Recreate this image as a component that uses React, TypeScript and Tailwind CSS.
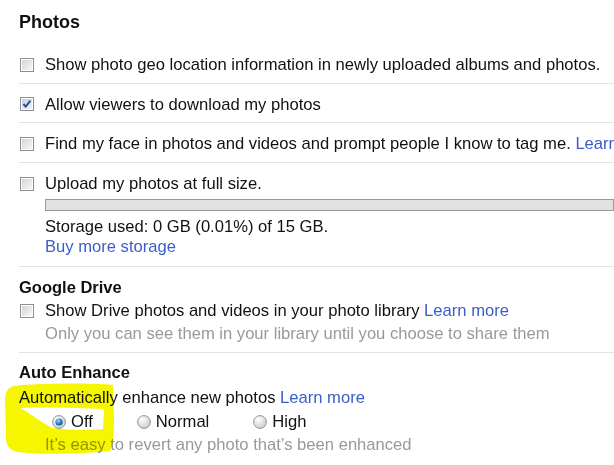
import React from 'react';

const FONT = { fontFamily: '"Liberation Sans", Arial, sans-serif' };

function Checkbox({ checked = false }: { checked?: boolean }) {
  return (
    <svg width="14" height="14" viewBox="0 0 14 14" className="shrink-0">
      <defs>
        <linearGradient id={checked ? 'cbOn' : 'cbOff'} x1="0" y1="0" x2="1" y2="1">
          <stop offset="0" stopColor={checked ? '#c3cee4' : '#d4d4d4'} />
          <stop offset="1" stopColor={checked ? '#f2f5fa' : '#f8f8f8'} />
        </linearGradient>
      </defs>
      <rect x="0.5" y="0.5" width="13" height="13" fill="#fff" stroke="#8e8f8f" />
      <rect x="2" y="2" width="10" height="10" fill={`url(#${checked ? 'cbOn' : 'cbOff'})`} />
      {checked && (
        <path d="M3.4 7 L5.8 9.6 L10.4 3.6" fill="none" stroke="#2a4a8c" strokeWidth="1.9" />
      )}
    </svg>
  );
}

function Radio({ checked = false }: { checked?: boolean }) {
  return (
    <svg width="14" height="14" viewBox="0 0 14 14" className="shrink-0">
      <defs>
        <radialGradient id="rOff" cx="0.35" cy="0.3" r="0.8">
          <stop offset="0" stopColor="#ffffff" />
          <stop offset="1" stopColor="#c8c8c8" />
        </radialGradient>
        <radialGradient id="rDot" cx="0.4" cy="0.35" r="0.7">
          <stop offset="0" stopColor="#9fe3ff" />
          <stop offset="0.5" stopColor="#2a8fd0" />
          <stop offset="1" stopColor="#0d3f7a" />
        </radialGradient>
      </defs>
      <circle cx="7" cy="7" r="6.4" fill="url(#rOff)" stroke="#8a8a8a" strokeWidth="0.9" />
      {checked && <circle cx="7" cy="7" r="3.6" fill="url(#rDot)" />}
    </svg>
  );
}

function CheckRow({ checked, h, children }: { checked?: boolean; h: string; children: React.ReactNode }) {
  return (
    <div className={`flex items-center gap-[11px] pl-px pt-[2px] border-b border-[#e3e3e3] whitespace-nowrap ${h}`}>
      <Checkbox checked={checked} />
      <span className="leading-[19px]">{children}</span>
    </div>
  );
}

const Link = ({ children }: { children: React.ReactNode }) => (
  <span className="text-[#3a5ec8]">{children}</span>
);

export default function App() {
  return (
    <div className="relative w-[614px] h-[465px] overflow-hidden bg-white text-[16.6px] text-[#111]" style={FONT}>
      <div className="pl-[19px]">
        <h2 className="font-bold text-[18px] leading-[21px] pt-[12px] pb-[11px]">Photos</h2>

        <CheckRow h="h-[40px]">Show photo geo location information in newly uploaded albums and photos.</CheckRow>
        <CheckRow h="h-[39px]" checked>
          Allow viewers to download my photos
        </CheckRow>
        <CheckRow h="h-[40px]">
          Find my face in photos and videos and prompt people I know to tag me. <Link>Learn more</Link>
        </CheckRow>

        <div className="pt-[11px] pb-[9px] border-b border-[#e3e3e3] whitespace-nowrap">
          <div className="flex items-center gap-[11px] pl-px h-[20px]">
            <Checkbox />
            <span>Upload my photos at full size.</span>
          </div>
          <div className="ml-[26px] mt-[5px] h-[12px] w-[569px] bg-[#e1e1e1] border border-[#9a9a9a]" />
          <div className="ml-[26px] leading-[20px] mt-[6px]">Storage used: 0 GB (0.01%) of 15 GB.</div>
          <div className="ml-[26px] leading-[20px]">
            <Link>Buy more storage</Link>
          </div>
        </div>

        <div className="pt-[9px] pb-[7px] border-b border-[#e3e3e3] whitespace-nowrap">
          <h2 className="font-bold text-[16.5px] leading-[23px]">Google Drive</h2>
          <div className="flex items-center gap-[11px] pl-px h-[24px]">
            <Checkbox />
            <span>
              Show Drive photos and videos in your photo library <Link>Learn more</Link>
            </span>
          </div>
          <div className="ml-[26px] leading-[22px] text-[#999]">
            Only you can see them in your library until you choose to share them
          </div>
        </div>

        <div className="pt-[8px] whitespace-nowrap">
          <h2 className="font-bold text-[16.5px] leading-[23px]">Auto Enhance</h2>
          <div className="mt-[2px] leading-[24px]">
            Automatically enhance new photos <Link>Learn more</Link>
          </div>
          <div className="flex items-center h-[24px] pl-[33px]">
            <label className="flex items-center gap-[5px] mr-[44px]">
              <Radio checked />
              <span>Off</span>
            </label>
            <label className="flex items-center gap-[5px] mr-[44px]">
              <Radio />
              <span>Normal</span>
            </label>
            <label className="flex items-center gap-[5px]">
              <Radio />
              <span>High</span>
            </label>
          </div>
          <div className="ml-[26px] leading-[21px] text-[#999]">It’s easy to revert any photo that’s been enhanced</div>
        </div>
      </div>

      {/* yellow marker scribble */}
      <svg
        className="absolute left-0 top-0 pointer-events-none mix-blend-multiply"
        width="614"
        height="465"
        viewBox="0 0 614 465"
      >
        <path
          fillRule="evenodd"
          fill="#f6f600"
          d="M14 386 C40 383 90 383 113 385 L114 420 C114 435 113 445 110 451 C80 454 40 455 18 452 C8 450 5 444 6 432 L5 400 C5 392 8 387 14 386 Z
             M21 408 C45 407 80 408 104 409 L103 429 C85 431 68 430 52 428 C40 421 30 414 21 408 Z"
        />
      </svg>
    </div>
  );
}
